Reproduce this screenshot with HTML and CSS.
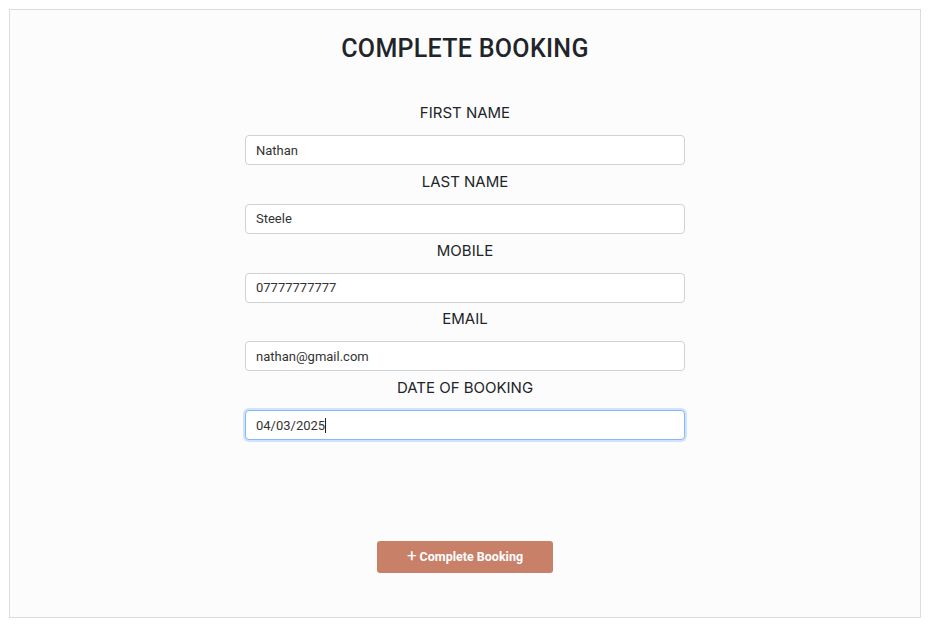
FILE: index.html
```html
<!DOCTYPE html>
<html lang="en">
<head>
<meta charset="utf-8">
<title>Complete Booking</title>
<link rel="stylesheet" href="styles.css">
</head>
<body>
<main class="card">
  <h1 class="title">COMPLETE BOOKING</h1>
  <form class="form">
    <div class="group">
      <label class="label" for="fn">FIRST NAME</label>
      <input class="field" id="fn" type="text" value="Nathan">
    </div>
    <div class="group">
      <label class="label" for="ln">LAST NAME</label>
      <input class="field" id="ln" type="text" value="Steele">
    </div>
    <div class="group">
      <label class="label" for="mob">MOBILE</label>
      <input class="field" id="mob" type="text" value="07777777777">
    </div>
    <div class="group">
      <label class="label" for="em">EMAIL</label>
      <input class="field" id="em" type="text" value="nathan@gmail.com">
    </div>
    <div class="group">
      <label class="label" for="dt">DATE OF BOOKING</label>
      <div class="field-wrap">
        <input class="field field-focus" id="dt" type="text" value="04/03/2025">
        <span class="caret"></span>
      </div>
    </div>
    <div class="actions">
      <button class="btn" type="button"><span class="plus">+</span>Complete Booking</button>
    </div>
  </form>
</main>
</body>
</html>
```
FILE: styles.css
```css
html, body {
  margin: 0;
  padding: 0;
  background: #ffffff;
}
body {
  padding: 9px 8px 8px 9px;
  font-family: "Inter", "Noto Sans", sans-serif;
  color: #212529;
}
.card {
  box-sizing: border-box;
  width: 912px;
  height: 609px;
  background: #fcfcfc;
  border: 1px solid #dcdcdc;
  display: flex;
  flex-direction: column;
  align-items: center;
}
.title {
  margin: 24px 0 0;
  font-family: "Roboto", "Liberation Sans", sans-serif;
  font-weight: 500;
  font-size: 25px;
  line-height: 30px;
  letter-spacing: 0.3px;
  color: #212529;
}
.form {
  margin-top: 35px;
  width: 440px;
  display: flex;
  flex-direction: column;
}
.group {
  display: flex;
  flex-direction: column;
  align-items: center;
  margin-bottom: 2.75px;
}
.label {
  display: block;
  font-family: "Inter", "Noto Sans", sans-serif;
  font-weight: 400;
  font-size: 15px;
  line-height: 24px;
  padding-top: 2px;
  margin-bottom: 10px;
  color: #212529;
}
.field-wrap {
  position: relative;
  width: 100%;
}
.field {
  box-sizing: border-box;
  width: 100%;
  height: 30px;
  padding: 0 10px;
  border: 1px solid #cfd2d5;
  border-radius: 4px;
  background: #ffffff;
  font-family: "Roboto", "Liberation Sans", sans-serif;
  font-size: 13px;
  color: #333333;
  outline: none;
}
.field-focus {
  border-color: #86b7fe;
  box-shadow: 0 0 0 2px rgba(13, 110, 253, 0.18);
}
.caret {
  position: absolute;
  left: 80px;
  top: 8px;
  width: 1px;
  height: 15px;
  background: #222;
}
.actions {
  display: flex;
  justify-content: center;
  margin-top: 98px;
}
.btn {
  width: 176px;
  height: 32px;
  border: none;
  border-radius: 3px;
  background: #c98068;
  color: #ffffff;
  font-family: "Roboto", "Liberation Sans", sans-serif;
  font-weight: 700;
  font-size: 12.5px;
  display: flex;
  align-items: center;
  justify-content: center;
  gap: 3px;
  padding: 0;
}
.plus {
  font-weight: 400;
  font-size: 17px;
  line-height: 1;
  margin-top: -2px;
}
```
